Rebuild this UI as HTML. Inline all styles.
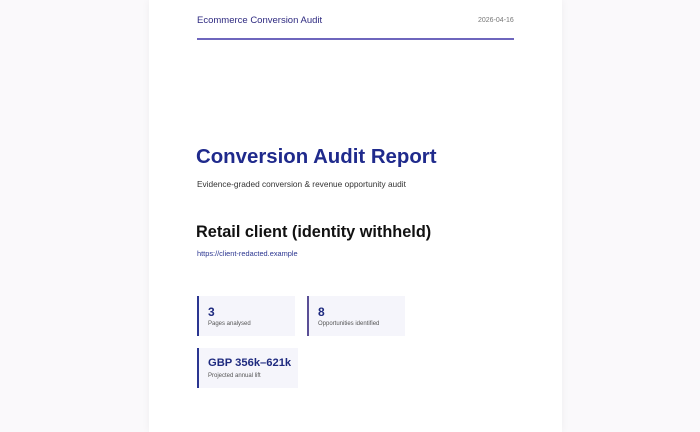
<!DOCTYPE html>
<html><head><style>
body{margin:0;width:700px;height:432px;background:#faf9fb;font-family:"Liberation Sans",sans-serif;overflow:hidden;position:relative}
.card{position:absolute;left:149px;top:0;width:413px;height:432px;background:#fff;box-shadow:0 0 8px rgba(0,0,0,.05)}
.a{position:absolute;white-space:nowrap}
.box{position:absolute;background:#f5f5fb;border-left:2px solid #2a3590;box-sizing:border-box;padding-left:9px}
.n{font-weight:bold;color:#1e2a7f;font-size:12px;position:absolute;left:9px;top:9px}
.l{font-size:6px;color:#555;position:absolute;left:9px;top:25px}
</style></head><body>
<div class="card"></div>
<div class="a" style="left:197px;top:15px;font-size:9.5px;color:#2e2a80">Ecommerce Conversion Audit</div>
<div class="a" style="left:478px;top:17px;font-size:7px;color:#777">2026-04-16</div>
<div class="a" style="left:197px;top:38px;width:317px;height:2px;background:#6e66bd"></div>
<div class="a" style="left:196px;top:146px;font-size:20.4px;font-weight:bold;color:#1f2a8c">Conversion Audit Report</div>
<div class="a" style="left:197px;top:179px;font-size:8.3px;color:#333">Evidence-graded conversion &amp; revenue opportunity audit</div>
<div class="a" style="left:196px;top:223px;font-size:16.3px;font-weight:bold;color:#111">Retail client (identity withheld)</div>
<div class="a" style="left:197px;top:249px;font-size:7.4px;color:#2a3590">https://client-redacted.example</div>
<div class="box" style="left:197px;top:296px;width:98px;height:40px"><div class="n">3</div><div class="l">Pages analysed</div></div>
<div class="box" style="left:307px;top:296px;width:98px;height:40px;border-color:#5a4f96"><div class="n">8</div><div class="l">Opportunities identified</div></div>
<div class="box" style="left:197px;top:348px;width:101px;height:40px"><div class="n" style="font-size:11.2px;top:9px">GBP 356k–621k</div><div class="l">Projected annual lift</div></div>
</body></html>
